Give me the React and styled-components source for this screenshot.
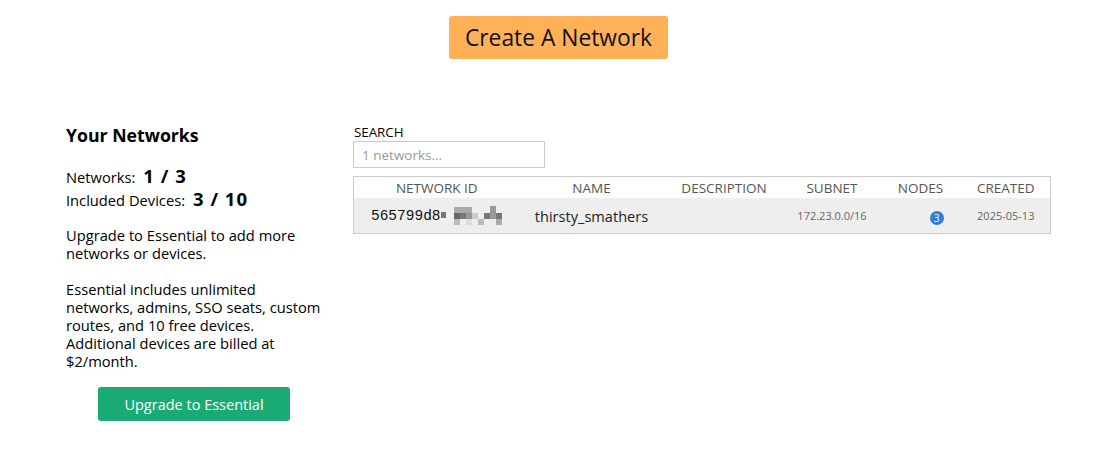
import React from 'react';
import styled, { createGlobalStyle } from 'styled-components';

const GlobalStyle = createGlobalStyle`
  body {
    margin: 0;
    background: #fff;
    font-family: "Open Sans", "Noto Sans", sans-serif;
    color: #000;
  }
`;

const Page = styled.div`
  width: 985px;
  margin-left: 66px;
  padding-top: 16px;
`;

const TopBar = styled.div`
  display: flex;
  justify-content: center;
`;

const CreateButton = styled.button`
  background: #ffb157;
  border: none;
  border-radius: 3px;
  width: 219px;
  height: 43px;
  font-family: inherit;
  font-size: 22.8px;
  color: #111;
  cursor: pointer;
`;

const Body = styled.div`
  display: flex;
  gap: 29px;
  margin-top: 64px;
`;

const Sidebar = styled.div`
  width: 259px;
  font-size: 14.7px;
  line-height: 18px;
`;

const Heading = styled.h3`
  margin: 0 0 20px;
  font-size: 17.7px;
  font-weight: 700;
  line-height: 24px;
`;

const Stat = styled.div`
  display: flex;
  align-items: baseline;
  gap: 8px;
  height: 23px;
`;

const StatValue = styled.b`
  font-size: 18.5px;
  font-weight: 700;
  letter-spacing: 1px;
`;

const Para = styled.p`
  margin: ${(p) => p.$top || 0}px 0 0;
`;

const UpgradeWrap = styled.div`
  display: flex;
  padding-left: 32px;
  margin-top: 17px;
`;

const UpgradeButton = styled.button`
  background: #1aab74;
  color: #fff;
  border: none;
  border-radius: 3px;
  width: 192px;
  height: 34px;
  font-family: inherit;
  font-size: 14.5px;
  cursor: pointer;
`;

const Main = styled.div`
  flex: 1;
  padding-top: 2px;
`;

const SearchLabel = styled.label`
  display: block;
  font-size: 13.3px;
  line-height: 14px;
  padding-left: 1px;
`;

const SearchInput = styled.input`
  display: block;
  box-sizing: border-box;
  width: 192px;
  height: 27px;
  margin-top: 2px;
  border: 1px solid #ccc;
  padding: 0 8px;
  font-family: inherit;
  font-size: 13.5px;
  &::placeholder {
    color: #999;
  }
`;

const Table = styled.table`
  margin-top: 8px;
  width: 697px;
  border-collapse: collapse;
  table-layout: fixed;
  border: 1px solid #ccc;
`;

const Th = styled.th`
  font-weight: 400;
  font-size: 13.5px;
  color: #555;
  height: 21px;
  padding: 0;
  text-align: center;
`;

const Row = styled.tr`
  background: #eee;
`;

const Td = styled.td`
  height: 35px;
  padding: 0;
  text-align: center;
  font-size: ${(p) => (p.$small ? '11px' : '14.6px')};
  color: ${(p) => (p.$small ? '#666' : '#222')};
  padding-left: ${(p) => p.$pl || 0}px;
`;

const IdCell = styled.div`
  display: flex;
  align-items: center;
  justify-content: center;
`;

const Mono = styled.span`
  font-family: "Liberation Mono", "DejaVu Sans Mono", monospace;
  font-size: 14.5px;
  color: #111;
`;

const Badge = styled.span`
  display: inline-flex;
  align-items: center;
  justify-content: center;
  width: 14px;
  height: 14px;
  border-radius: 50%;
  background: #2f7fdb;
  color: #fff;
  font-size: 10px;
  line-height: 1;
`;

// blurred remainder of the network id
const blocks = [
  [0, 4, 5, 6, '#777'],
  [13, -1, 18, 6, '#aaa'],
  [49, -2, 6, 7, '#999'],
  [13, 5, 6, 6, '#666'],
  [19, 5, 6, 6, '#777'],
  [25, 5, 6, 6, '#999'],
  [31, 5, 6, 6, '#ccc'],
  [43, 5, 6, 6, '#777'],
  [49, 5, 6, 6, '#999'],
  [55, 5, 6, 6, '#777'],
  [13, 11, 6, 6, '#bbb'],
  [25, 11, 6, 6, '#ddd'],
  [37, 11, 6, 6, '#bbb'],
  [55, 11, 6, 6, '#aaa'],
];

const Pixelated = () => (
  <svg width="62" height="19" viewBox="0 -2 62 19">
    {blocks.map(([x, y, w, h, c], i) => (
      <rect key={i} x={x} y={y} width={w} height={h} fill={c} />
    ))}
  </svg>
);

const networks = [
  {
    id: '565799d8',
    name: 'thirsty_smathers',
    description: '',
    subnet: '172.23.0.0/16',
    nodes: 3,
    created: '2025-05-13',
  },
];

export default function App() {
  return (
    <>
      <GlobalStyle />
      <Page>
        <TopBar>
          <CreateButton>Create A Network</CreateButton>
        </TopBar>
        <Body>
          <Sidebar>
            <Heading>Your Networks</Heading>
            <Stat>
              Networks: <StatValue>1 / 3</StatValue>
            </Stat>
            <Stat>
              Included Devices: <StatValue>3 / 10</StatValue>
            </Stat>
            <Para $top={13}>Upgrade to Essential to add more networks or devices.</Para>
            <Para $top={18}>
              Essential includes unlimited networks, admins, SSO seats, custom routes, and 10 free
              devices. Additional devices are billed at $2/month.
            </Para>
            <UpgradeWrap>
              <UpgradeButton>Upgrade to Essential</UpgradeButton>
            </UpgradeWrap>
          </Sidebar>
          <Main>
            <SearchLabel>SEARCH</SearchLabel>
            <SearchInput placeholder="1 networks..." />
            <Table>
              <colgroup>
                <col style={{ width: 166 }} />
                <col style={{ width: 144 }} />
                <col style={{ width: 121 }} />
                <col style={{ width: 95 }} />
                <col style={{ width: 82 }} />
                <col style={{ width: 89 }} />
              </colgroup>
              <thead>
                <tr>
                  <Th>NETWORK ID</Th>
                  <Th>NAME</Th>
                  <Th>DESCRIPTION</Th>
                  <Th>SUBNET</Th>
                  <Th>NODES</Th>
                  <Th>CREATED</Th>
                </tr>
              </thead>
              <tbody>
                {networks.map((n) => (
                  <Row key={n.id}>
                    <Td>
                      <IdCell>
                        <Mono>{n.id}</Mono>
                        <Pixelated />
                      </IdCell>
                    </Td>
                    <Td>{n.name}</Td>
                    <Td>{n.description}</Td>
                    <Td $small>{n.subnet}</Td>
                    <Td $pl={32}>
                      <Badge>{n.nodes}</Badge>
                    </Td>
                    <Td $small>{n.created}</Td>
                  </Row>
                ))}
              </tbody>
            </Table>
          </Main>
        </Body>
      </Page>
    </>
  );
}
